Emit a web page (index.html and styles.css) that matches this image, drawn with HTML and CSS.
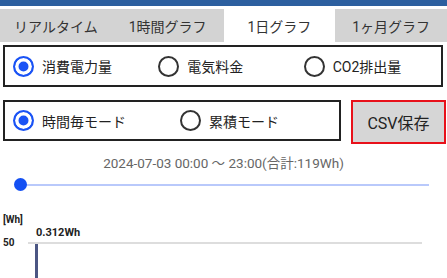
FILE: index.html
```html
<!DOCTYPE html>
<html lang="ja">
<head>
  <meta charset="UTF-8">
  <meta name="viewport" content="width=device-width, initial-scale=1.0">
  <title>電力グラフ</title>
  <link rel="stylesheet" href="styles.css">
</head>
<body>
  <div class="topbar"></div>
  <nav class="tabs">
    <div class="tab">リアルタイム</div>
    <div class="tab">1時間グラフ</div>
    <div class="tab active">1日グラフ</div>
    <div class="tab">1ヶ月グラフ</div>
  </nav>

  <div class="group group-3">
    <label class="option"><span class="radio on"></span>消費電力量</label>
    <label class="option"><span class="radio"></span>電気料金</label>
    <label class="option"><span class="radio"></span>CO2排出量</label>
  </div>

  <div class="mode-row">
    <div class="group group-2">
      <label class="option"><span class="radio on"></span>時間毎モード</label>
      <label class="option"><span class="radio"></span>累積モード</label>
    </div>
    <button class="csv">CSV保存</button>
  </div>

  <p class="range">2024-07-03 00:00 〜 23:00(合計:119Wh)</p>

  <div class="slider">
    <div class="track"><span class="thumb"></span></div>
  </div>

  <div class="chart">
    <div class="unit">[Wh]</div>
    <div class="tick">50</div>
    <div class="value">0.312Wh</div>
    <div class="gridline"></div>
    <div class="bar"></div>
  </div>
</body>
</html>
```

FILE: styles.css
```css
body {
  font-family: Roboto, "Noto Sans CJK JP", sans-serif;
  background-color: #fff;
  color: #222;
  margin: 0;
  overflow: hidden;
}
.topbar {
  height: 6px;
  background-color: #2c5f9f;
}
.tabs {
  display: flex;
  margin-top: 3px;
  height: 33px;
  background-color: #d3d3d3;
}
.tab {
  flex: 1;
  display: flex;
  align-items: center;
  justify-content: center;
  font-size: 14px;
  color: #333;
}
.tab.active {
  background-color: #fff;
}
.group {
  display: grid;
  border: 2px solid #222;
  box-sizing: border-box;
}
.group-3 {
  grid-template-columns: 1fr 1fr 1fr;
  margin: 3px 4px 0 3px;
  height: 42px;
}
.group-2 {
  grid-template-columns: 1fr 1fr;
  flex: 1;
  height: 41px;
}
.option {
  display: flex;
  align-items: center;
  gap: 8px;
  padding-left: 8px;
  font-size: 14px;
  color: #222;
}
.radio {
  width: 17px;
  height: 17px;
  border: 2px solid #333;
  border-radius: 50%;
  flex-shrink: 0;
}
.radio.on {
  border-color: #1a53f5;
  background-color: #1a53f5;
  box-shadow: inset 0 0 0 3.5px #fff;
}
.mode-row {
  display: flex;
  align-items: flex-start;
  gap: 10px;
  margin: 13px 1px 0 3px;
}
.csv {
  width: 95px;
  height: 44px;
  background-color: #d6d6d6;
  border: 2px solid #e8111a;
  font-family: Roboto, "Noto Sans CJK JP", sans-serif;
  font-size: 16px;
  color: #222;
  padding: 0;
}
.range {
  margin: 8px 0 0;
  text-align: center;
  font-size: 13.5px;
  color: #666;
}
.slider {
  padding: 0 18px 0 20px;
  margin-top: 12px;
}
.track {
  position: relative;
  height: 2px;
  background-color: #b9c9fb;
}
.thumb {
  position: absolute;
  left: -6px;
  top: -6px;
  width: 13px;
  height: 13px;
  border-radius: 50%;
  background-color: #1450f3;
}
.chart {
  position: relative;
  height: 92px;
  margin-top: 4px;
}
.unit, .tick, .value {
  position: absolute;
  font-size: 10px;
  font-weight: bold;
  color: #222;
}
.unit {
  left: 3px;
  top: 24px;
}
.tick {
  left: 3px;
  top: 47px;
}
.value {
  left: 36px;
  top: 36px;
  font-size: 11px;
}
.gridline {
  position: absolute;
  left: 28px;
  right: 25px;
  top: 52px;
  height: 2px;
  background-color: #ddd;
}
.bar {
  position: absolute;
  left: 35px;
  top: 54px;
  width: 3px;
  height: 40px;
  background-color: #4b5683;
}
```
